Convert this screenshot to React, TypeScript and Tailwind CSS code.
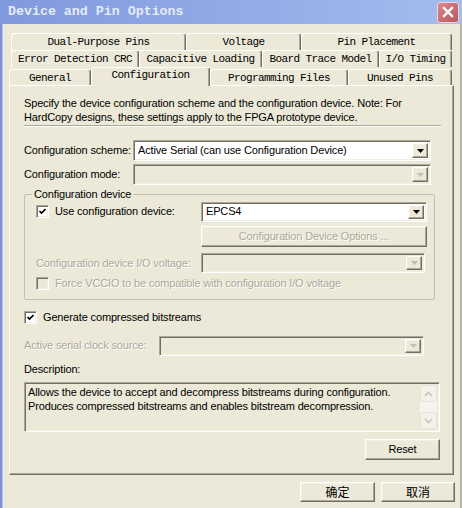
import React from "react";

const sunken =
  "border border-t-[#aca899] border-l-[#aca899] border-b-white border-r-white shadow-[inset_1px_1px_0_#716f64,inset_-1px_-1px_0_#f1efe2]";
const raised =
  "border border-t-white border-l-white border-b-[#716f64] border-r-[#716f64] shadow-[inset_-1px_-1px_0_#aca899,inset_1px_1px_0_#f1efe2]";
const grayText = "text-[#aca899] [text-shadow:1px_1px_0_#fff]";

function Arrow({ disabled }: { disabled?: boolean }) {
  return (
    <svg width="7" height="4" viewBox="0 0 7 4">
      <path d="M0 0h7L3.5 4z" fill={disabled ? "#c2bfb0" : "#000"} />
    </svg>
  );
}

function Combo({ value, disabled, className }: { value?: string; disabled?: boolean; className: string }) {
  return (
    <div className={`${className} h-[20px] flex p-[2px] ${sunken} ${disabled ? "bg-[#ece9d8]" : "bg-white"}`}>
      <div className="flex-1 pl-[2px] flex items-center text-black">{value}</div>
      <div className={`w-[16px] flex items-center justify-center bg-[#ece9d8] ${raised}`}>
        <Arrow disabled={disabled} />
      </div>
    </div>
  );
}

function Check({ checked, disabled }: { checked?: boolean; disabled?: boolean }) {
  return (
    <div className={`w-[13px] h-[13px] shrink-0 flex items-center justify-center ${sunken} ${disabled ? "bg-[#ece9d8]" : "bg-white"}`}>
      {checked && (
        <svg width="7" height="7" viewBox="0 0 7 7">
          <path d="M0.5 3 L2.5 5 L6.5 1" stroke="#000" strokeWidth="1.6" fill="none" />
        </svg>
      )}
    </div>
  );
}

function Tab({ className, children }: { className: string; children: React.ReactNode }) {
  return (
    <div
      className={`${className} flex items-center justify-center border-t border-l border-t-white border-l-white border-r border-r-[#716f64] shadow-[inset_-1px_0_0_#aca899] rounded-t-[3px]`}
    >
      {children}
    </div>
  );
}

function Button({ className, children, disabled }: { className: string; children: React.ReactNode; disabled?: boolean }) {
  return (
    <div className={`${className} flex items-center justify-center bg-[#ece9d8] ${raised} ${disabled ? grayText : "text-black"}`}>
      {children}
    </div>
  );
}

export default function App() {
  return (
    <div className="w-[462px] h-[508px] bg-[#ece9d8] flex flex-col overflow-hidden font-['Liberation_Sans',Arial,sans-serif] text-[11px] tracking-[-0.15px] text-black">
      {/* title bar */}
      <div className="h-[24px] shrink-0 flex items-center pl-[8px] pr-[3px] bg-gradient-to-r from-[#8099de] to-[#a5bcee]">
        <span className="flex-1 font-['Liberation_Mono',monospace] font-bold text-[13.3px] tracking-normal text-[#e4ebf8]">
          Device and Pin Options
        </span>
        <div className="w-[22px] h-[21px] rounded-[3px] border border-[#eed5d6] bg-gradient-to-br from-[#d88a8f] to-[#b8555e] flex items-center justify-center">
          <svg width="12" height="12" viewBox="0 0 12 12">
            <path d="M2 2L10 10M10 2L2 10" stroke="#fff" strokeWidth="2.4" strokeLinecap="square" />
          </svg>
        </div>
      </div>

      <div className="flex-1 flex">
        <div className="w-[3px] bg-[#7d90dd] border-r border-r-[#b6c2ee]" />
        <div className="flex-1 flex flex-col">
          {/* tabs */}
          <div className="mt-[9px] font-['Liberation_Mono',monospace] text-[11px] tracking-[-0.6px]">
            <div className="ml-[8px] flex h-[17px]">
              <Tab className="w-[175px]">Dual-Purpose Pins</Tab>
              <Tab className="w-[115px]">Voltage</Tab>
              <Tab className="w-[151px]">Pin Placement</Tab>
            </div>
            <div className="ml-[8px] flex h-[17px]">
              <Tab className="w-[128px]">Error Detection CRC</Tab>
              <Tab className="w-[123px]">Capacitive Loading</Tab>
              <Tab className="w-[117px]">Board Trace Model</Tab>
              <Tab className="w-[73px]">I/O Timing</Tab>
            </div>
            <div className="ml-[6px] flex items-end h-[18px]">
              <Tab className="w-[82px] h-[16px] pt-[2px]">General</Tab>
              <div className="relative z-10 -mb-px w-[119px] h-[19px] pb-[3px] bg-[#ece9d8] flex items-center justify-center border-t border-l border-t-white border-l-white border-r border-r-[#716f64] shadow-[inset_-1px_0_0_#aca899] rounded-t-[3px]">
                Configuration
              </div>
              <Tab className="w-[138px] h-[16px] pt-[2px]">Programming Files</Tab>
              <Tab className="w-[104px] h-[16px] pt-[2px]">Unused Pins</Tab>
            </div>
          </div>

          {/* panel */}
          <div className="ml-[6px] w-[445px] h-[390px] border border-t-white border-l-white border-b-[#716f64] border-r-[#716f64] shadow-[inset_-1px_-1px_0_#aca899] flex flex-col pl-[14px] pr-[12px]">
            <p className="mt-[10px] leading-[14px]">
              Specify the device configuration scheme and the configuration device. Note: For
              <br />
              HardCopy designs, these settings apply to the FPGA prototype device.
            </p>
            <div className="mt-[1px] h-[2px] border-t border-t-[#aca899] border-b border-b-white" />

            <div className="mt-[13px] flex items-center h-[21px]">
              <span className="w-[109px]">Configuration scheme:</span>
              <Combo className="w-[298px] h-[21px]" value="Active Serial (can use Configuration Device)" />
            </div>
            <div className="mt-[3px] flex items-center h-[21px]">
              <span className="w-[109px]">Configuration mode:</span>
              <Combo className="w-[298px] h-[21px]" disabled />
            </div>

            <fieldset className="mt-[3px] w-[411px] border border-[#c3c0b1] rounded-[2px] pl-[11px] pr-[7px] pb-[9px]">
              <legend className="ml-[-4px] px-[2px] leading-[13px]">Configuration device</legend>
              <div className="mt-[1px] flex items-center h-[19px]">
                <div className="w-[165px] flex items-center gap-[6px]">
                  <Check checked />
                  <span>Use configuration device:</span>
                </div>
                <Combo className="w-[226px] h-[19px]" value="EPCS4" />
              </div>
              <div className="mt-[5px] pl-[165px]">
                <Button className="w-[226px] h-[21px]" disabled>
                  Configuration Device Options ...
                </Button>
              </div>
              <div className="mt-[6px] flex items-center h-[20px]">
                <span className={`w-[165px] ${grayText}`}>Configuration device I/O voltage:</span>
                <Combo className="w-[224px] h-[20px]" disabled />
              </div>
              <div className="mt-[4px] flex items-center gap-[6px] h-[13px]">
                <Check disabled />
                <span className={grayText}>Force VCCIO to be compatible with configuration I/O voltage</span>
              </div>
            </fieldset>

            <div className="mt-[11px] flex items-center gap-[6px] h-[13px]">
              <Check checked />
              <span>Generate compressed bitstreams</span>
            </div>

            <div className="mt-[12px] flex items-center h-[19px]">
              <span className={`w-[135px] ${grayText}`}>Active serial clock source:</span>
              <Combo className="w-[265px] h-[19px]" disabled />
            </div>

            <div className="mt-[8px] h-[13px] leading-[13px]">Description:</div>

            <div className={`mt-[6px] w-[416px] h-[50px] flex p-[2px] bg-[#ece9d8] ${sunken}`}>
              <p className="flex-1 pl-[1px] leading-[14px]">
                Allows the device to accept and decompress bitstreams during configuration.
                <br />
                Produces compressed bitstreams and enables bitstream decompression.
              </p>
              <div className="w-[17px] flex flex-col bg-[#f5f4ef]">
                <div className="h-[17px] flex items-center justify-center bg-[#f2f1ea] border border-[#e6e4da] rounded-[2px]">
                  <svg width="9" height="6" viewBox="0 0 9 6">
                    <path d="M1 5L4.5 1.5L8 5" stroke="#c9c7bc" strokeWidth="1.6" fill="none" />
                  </svg>
                </div>
                <div className="flex-1" />
                <div className="h-[17px] flex items-center justify-center bg-[#f2f1ea] border border-[#e6e4da] rounded-[2px]">
                  <svg width="9" height="6" viewBox="0 0 9 6">
                    <path d="M1 1L4.5 4.5L8 1" stroke="#c9c7bc" strokeWidth="1.6" fill="none" />
                  </svg>
                </div>
              </div>
            </div>

            <div className="mt-[7px] flex justify-end pr-[1px]">
              <Button className="w-[75px] h-[21px]">Reset</Button>
            </div>
          </div>

          {/* dialog buttons */}
          <div className="mt-[7px] mr-[5px] flex justify-end gap-[6px] font-['Noto_Sans_CJK_SC',sans-serif] text-[12px] tracking-normal">
            <Button className="w-[75px] h-[20px]">确定</Button>
            <Button className="w-[74px] h-[20px]">取消</Button>
          </div>
        </div>
        <div className="w-[2px] bg-[#b5b3a8]" />
      </div>
    </div>
  );
}
